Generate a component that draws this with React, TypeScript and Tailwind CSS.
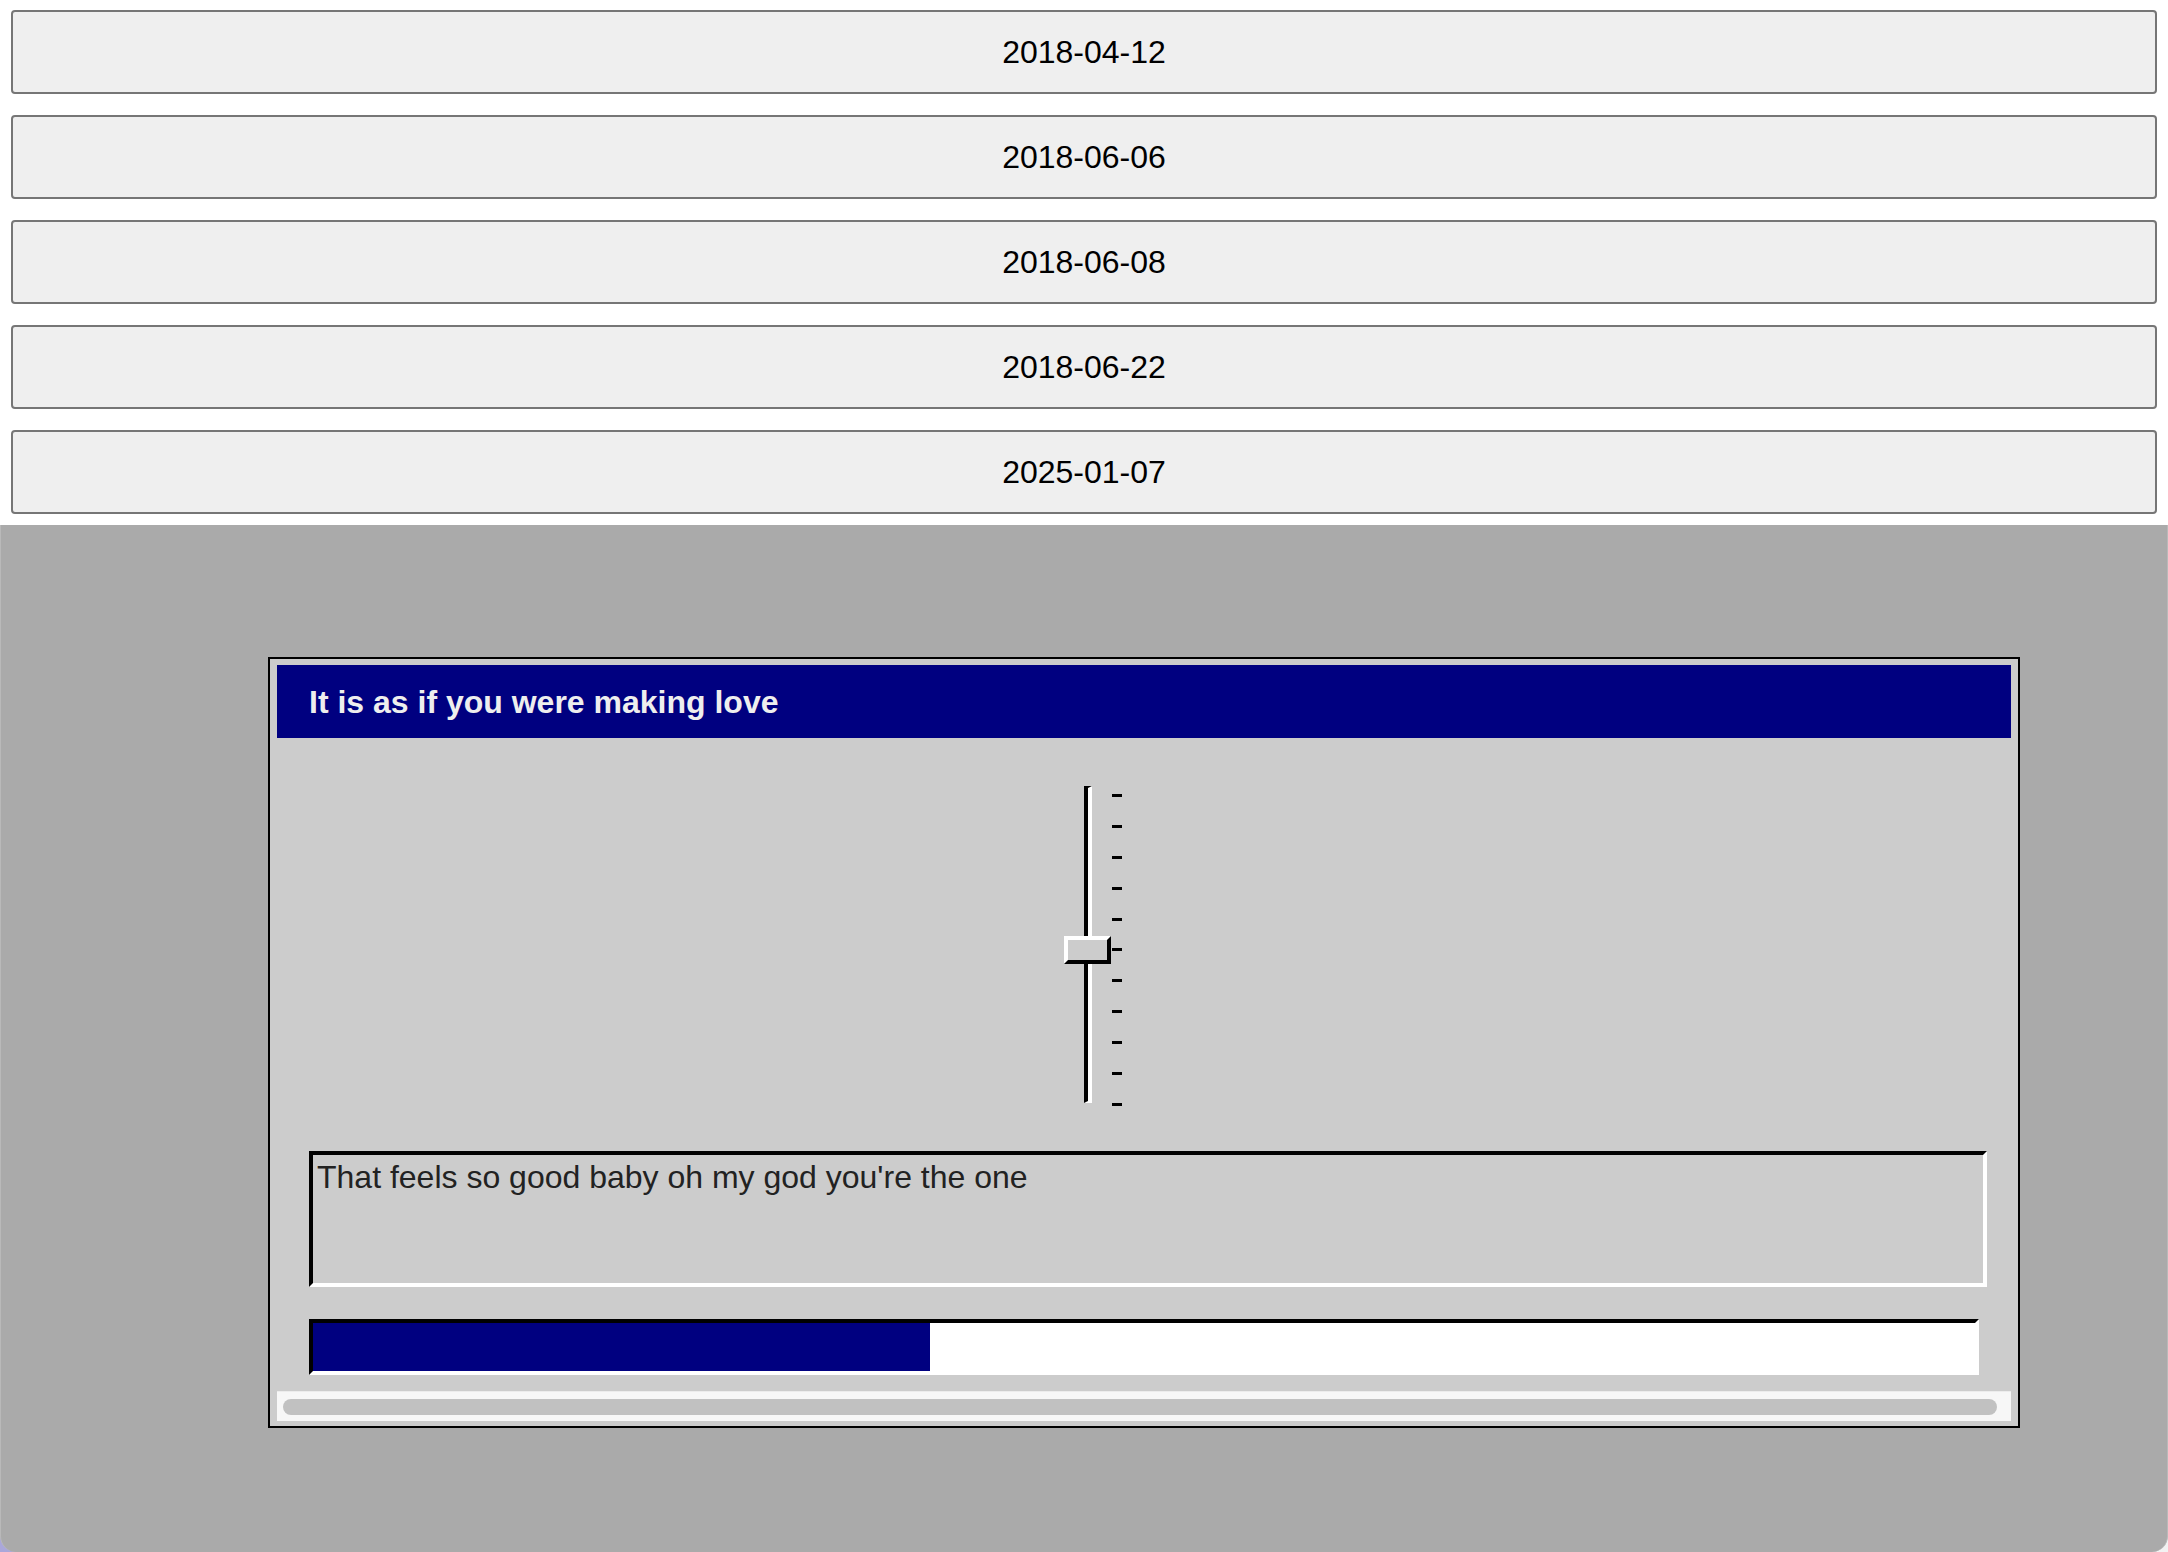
import React from "react";

const dates = ["2018-04-12", "2018-06-06", "2018-06-08", "2018-06-22", "2025-01-07"];

const ticks = Array.from({ length: 11 }, (_, i) => i);

const Slider = () => {
  return (
    <div className="relative ml-[755px] mt-[48px] h-[320px] w-[58px]">
      {/* track */}
      <div className="absolute left-[20px] top-0 h-[317px] w-[8px] border-l-[4px] border-t-[2px] border-r-[4px] border-b-[2px] border-l-black border-t-black border-r-white border-b-white bg-white" />
      {/* thumb */}
      <div className="absolute left-0 top-[150px] h-[28px] w-[47px] border-[4px] border-l-white border-t-white border-r-black border-b-black bg-[#cccccc]" />
      {/* ticks */}
      <div className="absolute left-[48px] top-[8px] flex h-[312px] flex-col justify-between">
        {ticks.map((t) => (
          <div key={t} className="h-[3px] w-[10px] bg-black" />
        ))}
      </div>
    </div>
  );
};

export default function App() {
  return (
    <div className="min-h-[1552px] w-full bg-white font-['Liberation_Sans',Arial,sans-serif]">
      <div className="flex flex-col gap-[21px] px-[11px] pt-[10px] pb-[11px]">
        {dates.map((d) => (
          <button
            key={d}
            className="flex h-[84px] w-full items-center justify-center rounded-[4px] border-2 border-[#767676] bg-[#efefef] text-[32px] text-black"
          >
            {d}
          </button>
        ))}
      </div>

      <div className="bg-linear-to-r from-[#aaa7da] to-[#f2f2f2]">
        <div className="h-[1027px] rounded-b-[16px] border-x border-[#b9b9b9] bg-[#aaaaaa] pt-[132px]">
          <div className="ml-[267px] w-[1752px] border-2 border-black bg-[#cccccc] px-[7px] pt-[6px] pb-[5px]">
            <div className="flex h-[73px] items-center bg-[#000080] pl-[32px] text-[32px] font-bold text-[#eeeeee]">
              It is as if you were making love
            </div>

            <div className="flex flex-col pl-[32px]">
              <Slider />

              <div className="mt-[45px] h-[136px] w-[1678px] border-[4px] border-l-black border-t-black border-r-white border-b-white bg-[#cccccc] pl-[4px] pt-[4px] text-[32px] leading-[37px] text-[#222222]">
                That feels so good baby oh my god you're the one
              </div>

              <div className="mt-[32px] flex h-[56px] w-[1670px] border-[4px] border-l-black border-t-black border-r-white border-b-white bg-white">
                <div className="h-full w-[617px] bg-[#000080]" />
              </div>
            </div>

            <div className="mt-[16px] flex h-[30px] items-center border-t border-[#ececec] bg-[#f7f7f7] pl-[6px] pr-[14px]">
              <div className="h-[16px] w-full rounded-full bg-[#c1c1c1]" />
            </div>
          </div>
        </div>
      </div>
    </div>
  );
}
